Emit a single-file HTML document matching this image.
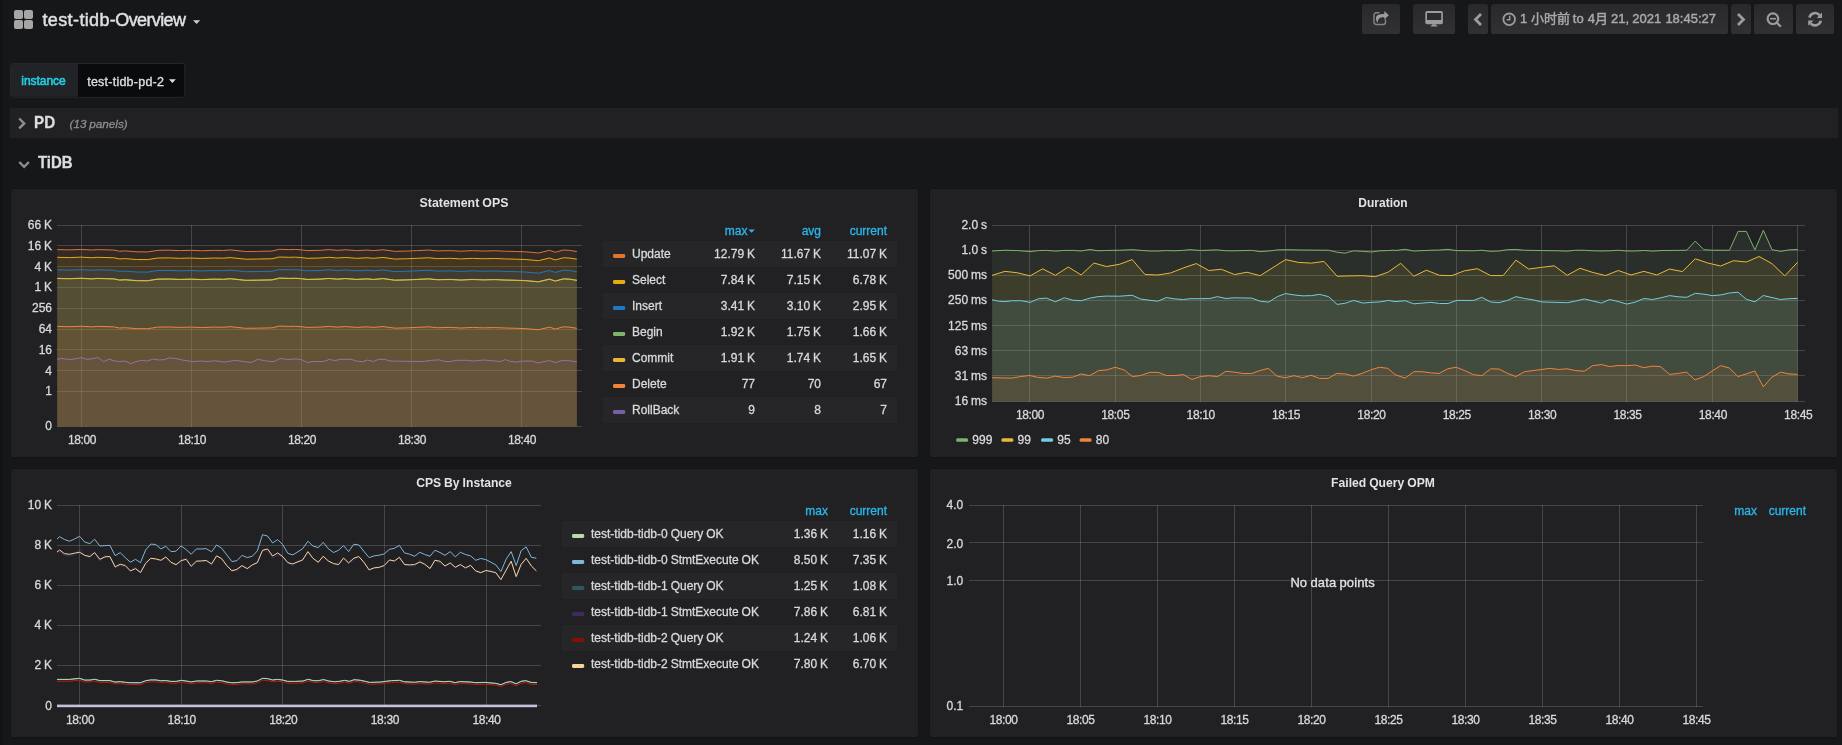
<!DOCTYPE html><html><head><meta charset="utf-8"><title>test-tidb-Overview</title>
<style>html,body{margin:0;padding:0;background:#161719;overflow:hidden}svg{display:block;will-change:transform}text{font-family:'Liberation Sans','Noto Sans CJK SC',sans-serif;white-space:pre;word-spacing:-0.4px}</style></head><body>
<svg width="1842" height="745" viewBox="0 0 1842 745">
<defs><linearGradient id="btn" x1="0" y1="0" x2="0" y2="1"><stop offset="0" stop-color="#29292b"/><stop offset="1" stop-color="#313133"/></linearGradient><linearGradient id="edge" x1="0" y1="0" x2="1" y2="0"><stop offset="0" stop-color="#101112"/><stop offset="0.5" stop-color="#131416"/><stop offset="1" stop-color="#161719"/></linearGradient></defs>
<rect width="1842" height="745" fill="#161719"/>
<rect x="0" y="0" width="5" height="745" fill="url(#edge)"/>
<rect x="14" y="10" width="9" height="9" rx="2" fill="#a6a6a6"/>
<rect x="24" y="10" width="9" height="9" rx="2" fill="#a6a6a6"/>
<rect x="14" y="20" width="9" height="9" rx="2" fill="#a6a6a6"/>
<rect x="24" y="20" width="9" height="9" rx="2" fill="#a6a6a6"/>
<text y="26.2" font-size="18" fill="#dfe0e1" stroke="#dfe0e1" stroke-width="0.45"><tspan x="42.5" letter-spacing="0.36">test-</tspan><tspan x="79.4" letter-spacing="0.36">tidb-</tspan><tspan x="115.3" letter-spacing="-0.62">Overview</tspan></text>
<path d="M193,20.2 h7.2 l-3.6,3.9 z" fill="#d0d0d0"/>
<rect x="1362" y="4" width="38" height="30" rx="2.5" fill="url(#btn)"/>
<path d="M1378.9,12.8 H1376.2 a2.2,2.2 0 0 0 -2.2,2.2 V22.2 a2.2,2.2 0 0 0 2.2,2.2 H1383.3 a2.2,2.2 0 0 0 2.2,-2.2 V19.8" fill="none" stroke="#838383" stroke-width="1.45" stroke-linecap="round"/>
<path d="M1384.3,11.0 L1388.8,15.2 L1384.3,19.5 L1384.3,17.3 C1381.5,17.3 1378.7,17.8 1378.1,20.6 C1377.9,21.5 1377.7,22.2 1377.4,22.9 C1376.4,21.2 1375.8,19.4 1376.0,17.6 C1376.4,15.0 1379,14.0 1384.3,14.0 Z" fill="#9c9c9c"/>
<rect x="1413" y="4" width="42" height="30" rx="2.5" fill="url(#btn)"/>
<path d="M1427,11 h14.2 a1.7,1.7 0 0 1 1.7,1.7 v9.9 a1.7,1.7 0 0 1 -1.7,1.7 h-14.2 a1.7,1.7 0 0 1 -1.7,-1.7 v-9.9 a1.7,1.7 0 0 1 1.7,-1.7 z M1427,12.9 v7 h14.2 v-7 z" fill="#9c9c9c" fill-rule="evenodd"/>
<path d="M1432.3,24.3 h3.6 l0.5,1.2 h1 v0.9 h-6.6 v-0.9 h1 z" fill="#9c9c9c"/>
<rect x="1468" y="4" width="20" height="30" rx="2.5" fill="url(#btn)"/>
<path d="M1481.0,14.1 l-5.5,5.5 l5.5,5.5" fill="none" stroke="#9c9c9c" stroke-width="2.8"/>
<rect x="1491" y="4" width="237" height="30" rx="2.5" fill="url(#btn)"/>
<circle cx="1509.2" cy="19.3" r="5.8" fill="none" stroke="#9c9c9c" stroke-width="1.8"/>
<path d="M1509.7,15.8 v4.0 h-3" fill="none" stroke="#9c9c9c" stroke-width="1.5"/>
<text y="23.1" font-size="13" fill="#a9a9a9" stroke="#a9a9a9" stroke-width="0.45"><tspan x="1520.0">1 </tspan><tspan x="1531.0">小时前 </tspan><tspan x="1572.8">to </tspan><tspan x="1587.7">4月 </tspan><tspan x="1611.0">21, </tspan><tspan x="1632.3">2021 </tspan><tspan x="1665.4">18:45:27</tspan></text>
<rect x="1731" y="4" width="20" height="30" rx="2.5" fill="url(#btn)"/>
<path d="M1738.0,14.1 l5.5,5.5 l-5.5,5.5" fill="none" stroke="#9c9c9c" stroke-width="2.8"/>
<rect x="1754" y="4" width="39" height="30" rx="2.5" fill="url(#btn)"/>
<circle cx="1772.9" cy="18.7" r="5.3" fill="none" stroke="#9c9c9c" stroke-width="2.2"/>
<path d="M1776.9,22.7 l3.3,3.3" stroke="#9c9c9c" stroke-width="2.3" stroke-linecap="round"/>
<path d="M1770,18.7 h6" stroke="#9c9c9c" stroke-width="1.6"/>
<rect x="1796" y="4" width="38" height="30" rx="2.5" fill="url(#btn)"/>
<path d="M1809.4,17.6 a5.9,5.9 0 0 1 10.2,-2.5" fill="none" stroke="#9c9c9c" stroke-width="2.6"/>
<path d="M1822,12.6 v5.3 h-5.3 z" fill="#9c9c9c"/>
<path d="M1820.8,20.8 a5.9,5.9 0 0 1 -10.2,2.5" fill="none" stroke="#9c9c9c" stroke-width="2.6"/>
<path d="M1808.2,25.8 v-5.3 h5.3 z" fill="#9c9c9c"/>
<rect x="10.5" y="63.5" width="174.3" height="33.8" rx="2.5" fill="#0a0b0d" stroke="#27272a"/>
<path d="M13,64 h65 v32.8 h-65 a2,2 0 0 1 -2,-2 v-28.8 a2,2 0 0 1 2,-2 z" fill="#222327"/>
<text x="21.30" y="84.90" font-size="12" fill="#20d2e4" letter-spacing="-0.05" stroke="#20d2e4" stroke-width="0.55">instance</text>
<text x="87.20" y="85.80" font-size="12.5" fill="#dfe0e1" letter-spacing="0.24" stroke="#dfe0e1" stroke-width="0.3">test-tidb-pd-2</text>
<path d="M169,79.3 h6.8 l-3.4,3.6 z" fill="#dfe0e1"/>
<rect x="10" y="108" width="1828" height="30" fill="#212124"/>
<path d="M19.2,118.5 l5.0,4.9 l-5.0,4.9" fill="none" stroke="#8e8e8e" stroke-width="2.4"/>
<text transform="translate(34.10,127.80) scale(0.95,1)" font-size="16" fill="#dcdddd" font-weight="bold" stroke="#dcdddd" stroke-width="0.3">PD</text>
<text x="69.60" y="127.50" font-size="11.8" fill="#8e8e8e" font-style="italic" letter-spacing="-0.05" stroke="#8e8e8e" stroke-width="0.3">(13 panels)</text>
<path d="M19.3,162.0 l4.8,4.8 l4.8,-4.8" fill="none" stroke="#8e8e8e" stroke-width="2.4"/>
<text transform="translate(37.90,167.60) scale(0.935,1)" font-size="16" fill="#dcdddd" font-weight="bold" stroke="#dcdddd" stroke-width="0.3">TiDB</text>
<rect x="10.5" y="188.5" width="908" height="269" rx="3" fill="#212124" stroke="#131314" stroke-width="1"/>
<rect x="929.5" y="188.5" width="908" height="269" rx="3" fill="#212124" stroke="#131314" stroke-width="1"/>
<rect x="10.5" y="468.5" width="908" height="269" rx="3" fill="#212124" stroke="#131314" stroke-width="1"/>
<rect x="929.5" y="468.5" width="908" height="269" rx="3" fill="#212124" stroke="#131314" stroke-width="1"/>
<text x="464" y="207.1" font-size="13" font-weight="bold" fill="#e2e3e4" text-anchor="middle" textLength="88.8" lengthAdjust="spacingAndGlyphs">Statement OPS</text>
<g id="c1">
<rect x="57" y="225" width="525" height="1" fill="rgba(200,200,200,0.22)"/>
<rect x="57" y="245" width="525" height="1" fill="rgba(200,200,200,0.22)"/>
<rect x="57" y="266" width="525" height="1" fill="rgba(200,200,200,0.22)"/>
<rect x="57" y="287" width="525" height="1" fill="rgba(200,200,200,0.22)"/>
<rect x="57" y="308" width="525" height="1" fill="rgba(200,200,200,0.22)"/>
<rect x="57" y="329" width="525" height="1" fill="rgba(200,200,200,0.22)"/>
<rect x="57" y="349" width="525" height="1" fill="rgba(200,200,200,0.22)"/>
<rect x="57" y="370" width="525" height="1" fill="rgba(200,200,200,0.22)"/>
<rect x="57" y="391" width="525" height="1" fill="rgba(200,200,200,0.22)"/>
<rect x="57" y="426" width="525" height="1" fill="rgba(200,200,200,0.22)"/>
<rect x="81" y="225" width="1" height="202" fill="rgba(200,200,200,0.22)"/>
<rect x="191" y="225" width="1" height="202" fill="rgba(200,200,200,0.22)"/>
<rect x="301" y="225" width="1" height="202" fill="rgba(200,200,200,0.22)"/>
<rect x="411" y="225" width="1" height="202" fill="rgba(200,200,200,0.22)"/>
<rect x="521" y="225" width="1" height="202" fill="rgba(200,200,200,0.22)"/>
<path d="M57.20,249.60 L69.66,249.89 L81.39,249.45 L91.66,250.04 L97.52,249.60 L113.65,250.04 L119.52,251.21 L125.38,250.92 L136.38,251.80 L147.38,251.94 L157.64,250.33 L169.37,250.18 L179.63,250.62 L191.36,250.33 L201.63,250.77 L213.36,250.33 L223.62,250.48 L230.22,249.89 L245.62,251.50 L257.35,251.36 L272.01,251.06 L279.34,249.30 L289.60,249.60 L295.47,249.45 L301.33,249.89 L307.20,250.62 L318.93,250.33 L320.00,250.33 L328.80,249.60 L337.60,250.33 L345.66,249.74 L356.66,250.62 L366.92,250.04 L373.52,250.62 L383.05,249.74 L394.78,251.36 L406.51,251.06 L416.77,250.62 L428.50,250.04 L437.30,250.92 L450.50,250.62 L460.76,251.21 L472.49,250.62 L482.76,251.06 L494.49,250.77 L505.48,251.21 L516.48,251.50 L525.28,251.80 L538.48,252.97 L549.47,250.33 L555.34,252.24 L563.40,250.04 L569.27,250.33 L576.89,251.50 L576.89,426.5 L57.20,426.5 Z" fill="#e0752d" fill-opacity="0.1" stroke="none"/>
<path d="M57.20,249.60 L69.66,249.89 L81.39,249.45 L91.66,250.04 L97.52,249.60 L113.65,250.04 L119.52,251.21 L125.38,250.92 L136.38,251.80 L147.38,251.94 L157.64,250.33 L169.37,250.18 L179.63,250.62 L191.36,250.33 L201.63,250.77 L213.36,250.33 L223.62,250.48 L230.22,249.89 L245.62,251.50 L257.35,251.36 L272.01,251.06 L279.34,249.30 L289.60,249.60 L295.47,249.45 L301.33,249.89 L307.20,250.62 L318.93,250.33 L320.00,250.33 L328.80,249.60 L337.60,250.33 L345.66,249.74 L356.66,250.62 L366.92,250.04 L373.52,250.62 L383.05,249.74 L394.78,251.36 L406.51,251.06 L416.77,250.62 L428.50,250.04 L437.30,250.92 L450.50,250.62 L460.76,251.21 L472.49,250.62 L482.76,251.06 L494.49,250.77 L505.48,251.21 L516.48,251.50 L525.28,251.80 L538.48,252.97 L549.47,250.33 L555.34,252.24 L563.40,250.04 L569.27,250.33 L576.89,251.50" fill="none" stroke="#e0752d" stroke-width="1" stroke-linejoin="round"/>
<path d="M57.20,257.30 L69.66,257.59 L81.39,257.15 L91.66,257.74 L97.52,257.30 L113.65,257.74 L119.52,258.91 L125.38,258.62 L136.38,259.50 L147.38,259.64 L157.64,258.03 L169.37,257.88 L179.63,258.32 L191.36,258.03 L201.63,258.47 L213.36,258.03 L223.62,258.18 L230.22,257.59 L245.62,259.20 L257.35,259.06 L272.01,258.76 L279.34,257.00 L289.60,257.30 L295.47,257.15 L301.33,257.59 L307.20,258.32 L318.93,258.03 L320.00,258.03 L328.80,257.30 L337.60,258.03 L345.66,257.44 L356.66,258.32 L366.92,257.74 L373.52,258.32 L383.05,257.44 L394.78,259.06 L406.51,258.76 L416.77,258.32 L428.50,257.74 L437.30,258.62 L450.50,258.32 L460.76,258.91 L472.49,258.32 L482.76,258.76 L494.49,258.47 L505.48,258.91 L516.48,259.20 L525.28,259.50 L538.48,260.67 L549.47,258.03 L555.34,259.94 L563.40,257.74 L569.27,258.03 L576.89,259.20 L576.89,426.5 L57.20,426.5 Z" fill="#e5ac0e" fill-opacity="0.1" stroke="none"/>
<path d="M57.20,257.30 L69.66,257.59 L81.39,257.15 L91.66,257.74 L97.52,257.30 L113.65,257.74 L119.52,258.91 L125.38,258.62 L136.38,259.50 L147.38,259.64 L157.64,258.03 L169.37,257.88 L179.63,258.32 L191.36,258.03 L201.63,258.47 L213.36,258.03 L223.62,258.18 L230.22,257.59 L245.62,259.20 L257.35,259.06 L272.01,258.76 L279.34,257.00 L289.60,257.30 L295.47,257.15 L301.33,257.59 L307.20,258.32 L318.93,258.03 L320.00,258.03 L328.80,257.30 L337.60,258.03 L345.66,257.44 L356.66,258.32 L366.92,257.74 L373.52,258.32 L383.05,257.44 L394.78,259.06 L406.51,258.76 L416.77,258.32 L428.50,257.74 L437.30,258.62 L450.50,258.32 L460.76,258.91 L472.49,258.32 L482.76,258.76 L494.49,258.47 L505.48,258.91 L516.48,259.20 L525.28,259.50 L538.48,260.67 L549.47,258.03 L555.34,259.94 L563.40,257.74 L569.27,258.03 L576.89,259.20" fill="none" stroke="#e5ac0e" stroke-width="1" stroke-linejoin="round"/>
<path d="M57.20,269.80 L69.66,270.09 L81.39,269.65 L91.66,270.24 L97.52,269.80 L113.65,270.24 L119.52,271.41 L125.38,271.12 L136.38,272.00 L147.38,272.14 L157.64,270.53 L169.37,270.38 L179.63,270.82 L191.36,270.53 L201.63,270.97 L213.36,270.53 L223.62,270.68 L230.22,270.09 L245.62,271.70 L257.35,271.56 L272.01,271.26 L279.34,269.50 L289.60,269.80 L295.47,269.65 L301.33,270.09 L307.20,270.82 L318.93,270.53 L320.00,270.53 L328.80,269.80 L337.60,270.53 L345.66,269.94 L356.66,270.82 L366.92,270.24 L373.52,270.82 L383.05,269.94 L394.78,271.56 L406.51,271.26 L416.77,270.82 L428.50,270.24 L437.30,271.12 L450.50,270.82 L460.76,271.41 L472.49,270.82 L482.76,271.26 L494.49,270.97 L505.48,271.41 L516.48,271.70 L525.28,272.00 L538.48,273.17 L549.47,270.53 L555.34,272.44 L563.40,270.24 L569.27,270.53 L576.89,271.70 L576.89,426.5 L57.20,426.5 Z" fill="#1f78c1" fill-opacity="0.1" stroke="none"/>
<path d="M57.20,269.80 L69.66,270.09 L81.39,269.65 L91.66,270.24 L97.52,269.80 L113.65,270.24 L119.52,271.41 L125.38,271.12 L136.38,272.00 L147.38,272.14 L157.64,270.53 L169.37,270.38 L179.63,270.82 L191.36,270.53 L201.63,270.97 L213.36,270.53 L223.62,270.68 L230.22,270.09 L245.62,271.70 L257.35,271.56 L272.01,271.26 L279.34,269.50 L289.60,269.80 L295.47,269.65 L301.33,270.09 L307.20,270.82 L318.93,270.53 L320.00,270.53 L328.80,269.80 L337.60,270.53 L345.66,269.94 L356.66,270.82 L366.92,270.24 L373.52,270.82 L383.05,269.94 L394.78,271.56 L406.51,271.26 L416.77,270.82 L428.50,270.24 L437.30,271.12 L450.50,270.82 L460.76,271.41 L472.49,270.82 L482.76,271.26 L494.49,270.97 L505.48,271.41 L516.48,271.70 L525.28,272.00 L538.48,273.17 L549.47,270.53 L555.34,272.44 L563.40,270.24 L569.27,270.53 L576.89,271.70" fill="none" stroke="#1f78c1" stroke-width="1" stroke-linejoin="round"/>
<path d="M57.20,278.30 L69.66,278.59 L81.39,278.15 L91.66,278.74 L97.52,278.30 L113.65,278.74 L119.52,279.91 L125.38,279.62 L136.38,280.50 L147.38,280.64 L157.64,279.03 L169.37,278.88 L179.63,279.32 L191.36,279.03 L201.63,279.47 L213.36,279.03 L223.62,279.18 L230.22,278.59 L245.62,280.20 L257.35,280.06 L272.01,279.76 L279.34,278.00 L289.60,278.30 L295.47,278.15 L301.33,278.59 L307.20,279.32 L318.93,279.03 L320.00,279.03 L328.80,278.30 L337.60,279.03 L345.66,278.44 L356.66,279.32 L366.92,278.74 L373.52,279.32 L383.05,278.44 L394.78,280.06 L406.51,279.76 L416.77,279.32 L428.50,278.74 L437.30,279.62 L450.50,279.32 L460.76,279.91 L472.49,279.32 L482.76,279.76 L494.49,279.47 L505.48,279.91 L516.48,280.20 L525.28,280.50 L538.48,281.67 L549.47,279.03 L555.34,280.94 L563.40,278.74 L569.27,279.03 L576.89,280.20 L576.89,426.5 L57.20,426.5 Z" fill="#7eb26d" fill-opacity="0.06" stroke="none"/>
<path d="M57.20,278.30 L69.66,278.59 L81.39,278.15 L91.66,278.74 L97.52,278.30 L113.65,278.74 L119.52,279.91 L125.38,279.62 L136.38,280.50 L147.38,280.64 L157.64,279.03 L169.37,278.88 L179.63,279.32 L191.36,279.03 L201.63,279.47 L213.36,279.03 L223.62,279.18 L230.22,278.59 L245.62,280.20 L257.35,280.06 L272.01,279.76 L279.34,278.00 L289.60,278.30 L295.47,278.15 L301.33,278.59 L307.20,279.32 L318.93,279.03 L320.00,279.03 L328.80,278.30 L337.60,279.03 L345.66,278.44 L356.66,279.32 L366.92,278.74 L373.52,279.32 L383.05,278.44 L394.78,280.06 L406.51,279.76 L416.77,279.32 L428.50,278.74 L437.30,279.62 L450.50,279.32 L460.76,279.91 L472.49,279.32 L482.76,279.76 L494.49,279.47 L505.48,279.91 L516.48,280.20 L525.28,280.50 L538.48,281.67 L549.47,279.03 L555.34,280.94 L563.40,278.74 L569.27,279.03 L576.89,280.20" fill="none" stroke="#7eb26d" stroke-width="1" stroke-linejoin="round"/>
<path d="M57.20,278.50 L69.66,278.79 L81.39,278.35 L91.66,278.94 L97.52,278.50 L113.65,278.94 L119.52,280.11 L125.38,279.82 L136.38,280.70 L147.38,280.84 L157.64,279.23 L169.37,279.08 L179.63,279.52 L191.36,279.23 L201.63,279.67 L213.36,279.23 L223.62,279.38 L230.22,278.79 L245.62,280.40 L257.35,280.26 L272.01,279.96 L279.34,278.20 L289.60,278.50 L295.47,278.35 L301.33,278.79 L307.20,279.52 L318.93,279.23 L320.00,279.23 L328.80,278.50 L337.60,279.23 L345.66,278.64 L356.66,279.52 L366.92,278.94 L373.52,279.52 L383.05,278.64 L394.78,280.26 L406.51,279.96 L416.77,279.52 L428.50,278.94 L437.30,279.82 L450.50,279.52 L460.76,280.11 L472.49,279.52 L482.76,279.96 L494.49,279.67 L505.48,280.11 L516.48,280.40 L525.28,280.70 L538.48,281.87 L549.47,279.23 L555.34,281.14 L563.40,278.94 L569.27,279.23 L576.89,280.40 L576.89,426.5 L57.20,426.5 Z" fill="#eab839" fill-opacity="0.1" stroke="none"/>
<path d="M57.20,278.50 L69.66,278.79 L81.39,278.35 L91.66,278.94 L97.52,278.50 L113.65,278.94 L119.52,280.11 L125.38,279.82 L136.38,280.70 L147.38,280.84 L157.64,279.23 L169.37,279.08 L179.63,279.52 L191.36,279.23 L201.63,279.67 L213.36,279.23 L223.62,279.38 L230.22,278.79 L245.62,280.40 L257.35,280.26 L272.01,279.96 L279.34,278.20 L289.60,278.50 L295.47,278.35 L301.33,278.79 L307.20,279.52 L318.93,279.23 L320.00,279.23 L328.80,278.50 L337.60,279.23 L345.66,278.64 L356.66,279.52 L366.92,278.94 L373.52,279.52 L383.05,278.64 L394.78,280.26 L406.51,279.96 L416.77,279.52 L428.50,278.94 L437.30,279.82 L450.50,279.52 L460.76,280.11 L472.49,279.52 L482.76,279.96 L494.49,279.67 L505.48,280.11 L516.48,280.40 L525.28,280.70 L538.48,281.87 L549.47,279.23 L555.34,281.14 L563.40,278.94 L569.27,279.23 L576.89,280.40" fill="none" stroke="#eab839" stroke-width="1" stroke-linejoin="round"/>
<path d="M57.20,326.40 L69.66,326.69 L81.39,326.25 L91.66,326.84 L97.52,326.40 L113.65,326.84 L119.52,328.01 L125.38,327.72 L136.38,328.60 L147.38,328.74 L157.64,327.13 L169.37,326.98 L179.63,327.42 L191.36,327.13 L201.63,327.57 L213.36,327.13 L223.62,327.28 L230.22,326.69 L245.62,328.30 L257.35,328.16 L272.01,327.86 L279.34,326.10 L289.60,326.40 L295.47,326.25 L301.33,326.69 L307.20,327.42 L318.93,327.13 L320.00,327.13 L328.80,326.40 L337.60,327.13 L345.66,326.54 L356.66,327.42 L366.92,326.84 L373.52,327.42 L383.05,326.54 L394.78,328.16 L406.51,327.86 L416.77,327.42 L428.50,326.84 L437.30,327.72 L450.50,327.42 L460.76,328.01 L472.49,327.42 L482.76,327.86 L494.49,327.57 L505.48,328.01 L516.48,328.30 L525.28,328.60 L538.48,329.77 L549.47,327.13 L555.34,329.04 L563.40,326.84 L569.27,327.13 L576.89,328.30 L576.89,426.5 L57.20,426.5 Z" fill="#ef843c" fill-opacity="0.1" stroke="none"/>
<path d="M57.20,326.40 L69.66,326.69 L81.39,326.25 L91.66,326.84 L97.52,326.40 L113.65,326.84 L119.52,328.01 L125.38,327.72 L136.38,328.60 L147.38,328.74 L157.64,327.13 L169.37,326.98 L179.63,327.42 L191.36,327.13 L201.63,327.57 L213.36,327.13 L223.62,327.28 L230.22,326.69 L245.62,328.30 L257.35,328.16 L272.01,327.86 L279.34,326.10 L289.60,326.40 L295.47,326.25 L301.33,326.69 L307.20,327.42 L318.93,327.13 L320.00,327.13 L328.80,326.40 L337.60,327.13 L345.66,326.54 L356.66,327.42 L366.92,326.84 L373.52,327.42 L383.05,326.54 L394.78,328.16 L406.51,327.86 L416.77,327.42 L428.50,326.84 L437.30,327.72 L450.50,327.42 L460.76,328.01 L472.49,327.42 L482.76,327.86 L494.49,327.57 L505.48,328.01 L516.48,328.30 L525.28,328.60 L538.48,329.77 L549.47,327.13 L555.34,329.04 L563.40,326.84 L569.27,327.13 L576.89,328.30" fill="none" stroke="#ef843c" stroke-width="1" stroke-linejoin="round"/>
<path d="M57.20,359.30 L60.87,358.42 L70.40,359.59 L81.39,357.68 L86.52,359.30 L91.66,358.86 L97.82,357.39 L103.68,361.79 L108.96,359.15 L115.12,361.06 L119.52,361.50 L125.38,361.06 L130.81,363.70 L135.65,361.79 L141.51,360.32 L147.08,361.06 L153.24,359.00 L158.37,360.03 L164.24,359.59 L169.37,357.83 L175.23,358.42 L182.57,360.03 L191.36,361.50 L201.63,361.06 L207.49,361.50 L214.82,360.76 L224.35,362.08 L235.35,360.32 L242.68,361.50 L251.48,362.52 L257.79,359.30 L263.21,360.47 L269.08,361.35 L274.21,361.50 L280.07,358.42 L285.94,359.30 L291.07,359.30 L296.20,358.86 L301.33,359.59 L307.49,362.52 L313.06,361.50 L318.93,361.50 L320.00,361.79 L324.40,361.35 L329.53,359.30 L334.66,360.62 L340.53,359.30 L350.79,359.30 L356.66,361.06 L362.52,361.79 L367.65,360.03 L373.52,361.50 L378.65,359.30 L384.52,359.30 L390.38,361.06 L410.91,361.35 L422.64,361.50 L431.44,360.32 L439.50,359.88 L444.63,361.50 L450.50,361.50 L456.36,360.32 L466.63,360.32 L472.49,361.06 L483.49,360.03 L500.35,361.50 L505.48,359.59 L510.62,361.50 L516.48,362.08 L522.35,361.06 L532.61,361.06 L538.48,362.96 L544.34,361.50 L549.47,360.62 L555.34,362.52 L561.94,360.62 L567.80,360.62 L576.89,361.79 L576.89,426.5 L57.20,426.5 Z" fill="#9a6ea8" fill-opacity="0.05" stroke="none"/>
<path d="M57.20,359.30 L60.87,358.42 L70.40,359.59 L81.39,357.68 L86.52,359.30 L91.66,358.86 L97.82,357.39 L103.68,361.79 L108.96,359.15 L115.12,361.06 L119.52,361.50 L125.38,361.06 L130.81,363.70 L135.65,361.79 L141.51,360.32 L147.08,361.06 L153.24,359.00 L158.37,360.03 L164.24,359.59 L169.37,357.83 L175.23,358.42 L182.57,360.03 L191.36,361.50 L201.63,361.06 L207.49,361.50 L214.82,360.76 L224.35,362.08 L235.35,360.32 L242.68,361.50 L251.48,362.52 L257.79,359.30 L263.21,360.47 L269.08,361.35 L274.21,361.50 L280.07,358.42 L285.94,359.30 L291.07,359.30 L296.20,358.86 L301.33,359.59 L307.49,362.52 L313.06,361.50 L318.93,361.50 L320.00,361.79 L324.40,361.35 L329.53,359.30 L334.66,360.62 L340.53,359.30 L350.79,359.30 L356.66,361.06 L362.52,361.79 L367.65,360.03 L373.52,361.50 L378.65,359.30 L384.52,359.30 L390.38,361.06 L410.91,361.35 L422.64,361.50 L431.44,360.32 L439.50,359.88 L444.63,361.50 L450.50,361.50 L456.36,360.32 L466.63,360.32 L472.49,361.06 L483.49,360.03 L500.35,361.50 L505.48,359.59 L510.62,361.50 L516.48,362.08 L522.35,361.06 L532.61,361.06 L538.48,362.96 L544.34,361.50 L549.47,360.62 L555.34,362.52 L561.94,360.62 L567.80,360.62 L576.89,361.79" fill="none" stroke="#9a6ea8" stroke-width="1" stroke-linejoin="round"/>
</g>
<text x="52.00" y="228.90" font-size="12" fill="#d8d9da" text-anchor="end" stroke="#d8d9da" stroke-width="0.3">66 K</text>
<text x="52.00" y="249.71" font-size="12" fill="#d8d9da" text-anchor="end" stroke="#d8d9da" stroke-width="0.3">16 K</text>
<text x="52.00" y="270.52" font-size="12" fill="#d8d9da" text-anchor="end" stroke="#d8d9da" stroke-width="0.3">4 K</text>
<text x="52.00" y="291.33" font-size="12" fill="#d8d9da" text-anchor="end" stroke="#d8d9da" stroke-width="0.3">1 K</text>
<text x="52.00" y="312.14" font-size="12" fill="#d8d9da" text-anchor="end" stroke="#d8d9da" stroke-width="0.3">256</text>
<text x="52.00" y="332.95" font-size="12" fill="#d8d9da" text-anchor="end" stroke="#d8d9da" stroke-width="0.3">64</text>
<text x="52.00" y="353.76" font-size="12" fill="#d8d9da" text-anchor="end" stroke="#d8d9da" stroke-width="0.3">16</text>
<text x="52.00" y="374.57" font-size="12" fill="#d8d9da" text-anchor="end" stroke="#d8d9da" stroke-width="0.3">4</text>
<text x="52.00" y="395.38" font-size="12" fill="#d8d9da" text-anchor="end" stroke="#d8d9da" stroke-width="0.3">1</text>
<text x="52.00" y="430.10" font-size="12" fill="#d8d9da" text-anchor="end" stroke="#d8d9da" stroke-width="0.3">0</text>
<text x="82.00" y="444.00" font-size="12" fill="#d8d9da" text-anchor="middle" letter-spacing="-0.36" stroke="#d8d9da" stroke-width="0.3">18:00</text>
<text x="192.00" y="444.00" font-size="12" fill="#d8d9da" text-anchor="middle" letter-spacing="-0.36" stroke="#d8d9da" stroke-width="0.3">18:10</text>
<text x="302.00" y="444.00" font-size="12" fill="#d8d9da" text-anchor="middle" letter-spacing="-0.36" stroke="#d8d9da" stroke-width="0.3">18:20</text>
<text x="412.00" y="444.00" font-size="12" fill="#d8d9da" text-anchor="middle" letter-spacing="-0.36" stroke="#d8d9da" stroke-width="0.3">18:30</text>
<text x="522.00" y="444.00" font-size="12" fill="#d8d9da" text-anchor="middle" letter-spacing="-0.36" stroke="#d8d9da" stroke-width="0.3">18:40</text>
<text x="747.50" y="234.90" font-size="12" fill="#2ab8ec" text-anchor="end" stroke="#2ab8ec" stroke-width="0.3">max</text>
<path d="M748.4,229.4 h6.4 l-3.2,3.4 z" fill="#2ab8ec"/>
<text x="821.00" y="234.90" font-size="12" fill="#2ab8ec" text-anchor="end" stroke="#2ab8ec" stroke-width="0.3">avg</text>
<text x="887.00" y="234.90" font-size="12" fill="#2ab8ec" text-anchor="end" stroke="#2ab8ec" stroke-width="0.3">current</text>
<rect x="603" y="241" width="294" height="26" fill="#262628"/>
<rect x="613" y="254.1" width="12.2" height="3.8" rx="1.3" fill="#e0752d"/>
<text x="632.00" y="258.00" font-size="12" fill="#d8d9da" stroke="#d8d9da" stroke-width="0.3">Update</text>
<text x="755.00" y="258.00" font-size="12" fill="#d8d9da" text-anchor="end" stroke="#d8d9da" stroke-width="0.3">12.79 K</text>
<text x="821.00" y="258.00" font-size="12" fill="#d8d9da" text-anchor="end" stroke="#d8d9da" stroke-width="0.3">11.67 K</text>
<text x="887.00" y="258.00" font-size="12" fill="#d8d9da" text-anchor="end" stroke="#d8d9da" stroke-width="0.3">11.07 K</text>
<rect x="613" y="280.1" width="12.2" height="3.8" rx="1.3" fill="#e5ac0e"/>
<text x="632.00" y="284.00" font-size="12" fill="#d8d9da" stroke="#d8d9da" stroke-width="0.3">Select</text>
<text x="755.00" y="284.00" font-size="12" fill="#d8d9da" text-anchor="end" stroke="#d8d9da" stroke-width="0.3">7.84 K</text>
<text x="821.00" y="284.00" font-size="12" fill="#d8d9da" text-anchor="end" stroke="#d8d9da" stroke-width="0.3">7.15 K</text>
<text x="887.00" y="284.00" font-size="12" fill="#d8d9da" text-anchor="end" stroke="#d8d9da" stroke-width="0.3">6.78 K</text>
<rect x="603" y="293" width="294" height="26" fill="#262628"/>
<rect x="613" y="306.1" width="12.2" height="3.8" rx="1.3" fill="#1f78c1"/>
<text x="632.00" y="310.00" font-size="12" fill="#d8d9da" stroke="#d8d9da" stroke-width="0.3">Insert</text>
<text x="755.00" y="310.00" font-size="12" fill="#d8d9da" text-anchor="end" stroke="#d8d9da" stroke-width="0.3">3.41 K</text>
<text x="821.00" y="310.00" font-size="12" fill="#d8d9da" text-anchor="end" stroke="#d8d9da" stroke-width="0.3">3.10 K</text>
<text x="887.00" y="310.00" font-size="12" fill="#d8d9da" text-anchor="end" stroke="#d8d9da" stroke-width="0.3">2.95 K</text>
<rect x="613" y="332.1" width="12.2" height="3.8" rx="1.3" fill="#7eb26d"/>
<text x="632.00" y="336.00" font-size="12" fill="#d8d9da" stroke="#d8d9da" stroke-width="0.3">Begin</text>
<text x="755.00" y="336.00" font-size="12" fill="#d8d9da" text-anchor="end" stroke="#d8d9da" stroke-width="0.3">1.92 K</text>
<text x="821.00" y="336.00" font-size="12" fill="#d8d9da" text-anchor="end" stroke="#d8d9da" stroke-width="0.3">1.75 K</text>
<text x="887.00" y="336.00" font-size="12" fill="#d8d9da" text-anchor="end" stroke="#d8d9da" stroke-width="0.3">1.66 K</text>
<rect x="603" y="345" width="294" height="26" fill="#262628"/>
<rect x="613" y="358.1" width="12.2" height="3.8" rx="1.3" fill="#eab839"/>
<text x="632.00" y="362.00" font-size="12" fill="#d8d9da" stroke="#d8d9da" stroke-width="0.3">Commit</text>
<text x="755.00" y="362.00" font-size="12" fill="#d8d9da" text-anchor="end" stroke="#d8d9da" stroke-width="0.3">1.91 K</text>
<text x="821.00" y="362.00" font-size="12" fill="#d8d9da" text-anchor="end" stroke="#d8d9da" stroke-width="0.3">1.74 K</text>
<text x="887.00" y="362.00" font-size="12" fill="#d8d9da" text-anchor="end" stroke="#d8d9da" stroke-width="0.3">1.65 K</text>
<rect x="613" y="384.1" width="12.2" height="3.8" rx="1.3" fill="#ef843c"/>
<text x="632.00" y="388.00" font-size="12" fill="#d8d9da" stroke="#d8d9da" stroke-width="0.3">Delete</text>
<text x="755.00" y="388.00" font-size="12" fill="#d8d9da" text-anchor="end" stroke="#d8d9da" stroke-width="0.3">77</text>
<text x="821.00" y="388.00" font-size="12" fill="#d8d9da" text-anchor="end" stroke="#d8d9da" stroke-width="0.3">70</text>
<text x="887.00" y="388.00" font-size="12" fill="#d8d9da" text-anchor="end" stroke="#d8d9da" stroke-width="0.3">67</text>
<rect x="603" y="397" width="294" height="26" fill="#262628"/>
<rect x="613" y="410.1" width="12.2" height="3.8" rx="1.3" fill="#755fa6"/>
<text x="632.00" y="414.00" font-size="12" fill="#d8d9da" stroke="#d8d9da" stroke-width="0.3">RollBack</text>
<text x="755.00" y="414.00" font-size="12" fill="#d8d9da" text-anchor="end" stroke="#d8d9da" stroke-width="0.3">9</text>
<text x="821.00" y="414.00" font-size="12" fill="#d8d9da" text-anchor="end" stroke="#d8d9da" stroke-width="0.3">8</text>
<text x="887.00" y="414.00" font-size="12" fill="#d8d9da" text-anchor="end" stroke="#d8d9da" stroke-width="0.3">7</text>
<text x="1383" y="207.1" font-size="13" font-weight="bold" fill="#e2e3e4" text-anchor="middle" textLength="49.3" lengthAdjust="spacingAndGlyphs">Duration</text>
<g id="c2">
<rect x="992" y="225" width="813" height="1" fill="rgba(200,200,200,0.22)"/>
<rect x="992" y="250" width="813" height="1" fill="rgba(200,200,200,0.22)"/>
<rect x="992" y="275" width="813" height="1" fill="rgba(200,200,200,0.22)"/>
<rect x="992" y="300" width="813" height="1" fill="rgba(200,200,200,0.22)"/>
<rect x="992" y="325" width="813" height="1" fill="rgba(200,200,200,0.22)"/>
<rect x="992" y="350" width="813" height="1" fill="rgba(200,200,200,0.22)"/>
<rect x="992" y="375" width="813" height="1" fill="rgba(200,200,200,0.22)"/>
<rect x="992" y="401" width="813" height="1" fill="rgba(200,200,200,0.22)"/>
<rect x="1029" y="225" width="1" height="177" fill="rgba(200,200,200,0.22)"/>
<rect x="1115" y="225" width="1" height="177" fill="rgba(200,200,200,0.22)"/>
<rect x="1200" y="225" width="1" height="177" fill="rgba(200,200,200,0.22)"/>
<rect x="1285" y="225" width="1" height="177" fill="rgba(200,200,200,0.22)"/>
<rect x="1371" y="225" width="1" height="177" fill="rgba(200,200,200,0.22)"/>
<rect x="1456" y="225" width="1" height="177" fill="rgba(200,200,200,0.22)"/>
<rect x="1541" y="225" width="1" height="177" fill="rgba(200,200,200,0.22)"/>
<rect x="1626" y="225" width="1" height="177" fill="rgba(200,200,200,0.22)"/>
<rect x="1712" y="225" width="1" height="177" fill="rgba(200,200,200,0.22)"/>
<rect x="1797" y="225" width="1" height="177" fill="rgba(200,200,200,0.22)"/>
<path d="M992.07,251.03 L1004.96,250.23 L1017.51,250.57 L1030.06,251.60 L1038.61,250.57 L1046.59,250.34 L1055.38,251.14 L1063.70,250.46 L1072.83,250.34 L1081.16,251.03 L1089.94,249.43 L1097.92,250.80 L1106.48,250.46 L1119.60,250.23 L1132.14,249.66 L1140.70,250.34 L1149.25,251.03 L1157.81,251.03 L1166.36,250.57 L1174.92,250.80 L1183.47,250.34 L1189.17,249.66 L1190.00,249.66 L1200.61,250.46 L1217.38,249.88 L1225.93,250.80 L1234.49,250.80 L1251.59,250.34 L1260.15,251.60 L1268.70,251.03 L1277.26,249.88 L1285.59,249.66 L1302.92,250.00 L1328.59,250.23 L1337.14,252.28 L1345.13,253.08 L1353.68,250.80 L1362.81,251.37 L1371.36,251.94 L1379.92,250.80 L1388.47,250.57 L1394.17,250.11 L1395.00,250.57 L1405.27,249.31 L1413.82,251.03 L1430.93,250.23 L1439.49,250.00 L1448.04,249.31 L1456.59,250.57 L1473.70,250.80 L1481.69,250.23 L1490.59,251.37 L1498.80,251.03 L1507.35,249.66 L1515.91,249.43 L1524.46,250.23 L1541.57,250.57 L1558.68,250.80 L1567.24,251.14 L1575.79,250.23 L1584.35,250.23 L1592.90,250.80 L1599.17,250.91 L1600.00,251.03 L1609.70,250.80 L1618.25,250.23 L1626.81,251.03 L1635.36,251.03 L1643.91,250.46 L1652.47,251.14 L1661.02,250.57 L1686.69,250.23 L1695.24,241.10 L1703.80,249.66 L1712.35,250.23 L1729.46,250.23 L1738.02,231.41 L1746.34,231.41 L1754.90,249.88 L1763.34,230.27 L1772.01,249.66 L1780.56,251.37 L1789.12,249.88 L1797.67,249.43 L1797.67,401.5 L992.07,401.5 Z" fill="#7eb26d" fill-opacity="0.1" stroke="none"/>
<path d="M992.07,251.03 L1004.96,250.23 L1017.51,250.57 L1030.06,251.60 L1038.61,250.57 L1046.59,250.34 L1055.38,251.14 L1063.70,250.46 L1072.83,250.34 L1081.16,251.03 L1089.94,249.43 L1097.92,250.80 L1106.48,250.46 L1119.60,250.23 L1132.14,249.66 L1140.70,250.34 L1149.25,251.03 L1157.81,251.03 L1166.36,250.57 L1174.92,250.80 L1183.47,250.34 L1189.17,249.66 L1190.00,249.66 L1200.61,250.46 L1217.38,249.88 L1225.93,250.80 L1234.49,250.80 L1251.59,250.34 L1260.15,251.60 L1268.70,251.03 L1277.26,249.88 L1285.59,249.66 L1302.92,250.00 L1328.59,250.23 L1337.14,252.28 L1345.13,253.08 L1353.68,250.80 L1362.81,251.37 L1371.36,251.94 L1379.92,250.80 L1388.47,250.57 L1394.17,250.11 L1395.00,250.57 L1405.27,249.31 L1413.82,251.03 L1430.93,250.23 L1439.49,250.00 L1448.04,249.31 L1456.59,250.57 L1473.70,250.80 L1481.69,250.23 L1490.59,251.37 L1498.80,251.03 L1507.35,249.66 L1515.91,249.43 L1524.46,250.23 L1541.57,250.57 L1558.68,250.80 L1567.24,251.14 L1575.79,250.23 L1584.35,250.23 L1592.90,250.80 L1599.17,250.91 L1600.00,251.03 L1609.70,250.80 L1618.25,250.23 L1626.81,251.03 L1635.36,251.03 L1643.91,250.46 L1652.47,251.14 L1661.02,250.57 L1686.69,250.23 L1695.24,241.10 L1703.80,249.66 L1712.35,250.23 L1729.46,250.23 L1738.02,231.41 L1746.34,231.41 L1754.90,249.88 L1763.34,230.27 L1772.01,249.66 L1780.56,251.37 L1789.12,249.88 L1797.67,249.43" fill="none" stroke="#7eb26d" stroke-width="1" stroke-linejoin="round"/>
<path d="M992.07,275.32 L1004.96,271.33 L1017.51,272.81 L1030.06,275.89 L1042.60,268.82 L1055.38,275.32 L1068.27,266.99 L1081.16,274.98 L1093.93,263.00 L1106.48,266.54 L1119.60,264.26 L1132.14,259.58 L1145.03,274.52 L1157.81,274.98 L1170.35,273.04 L1183.47,267.91 L1196.27,263.57 L1208.82,270.53 L1221.37,269.28 L1234.49,274.52 L1247.03,272.24 L1260.15,275.66 L1285.59,259.58 L1298.36,262.43 L1311.48,263.12 L1324.03,261.41 L1337.14,276.23 L1349.69,275.89 L1362.81,275.66 L1375.35,276.69 L1387.90,272.24 L1400.70,263.34 L1413.82,276.23 L1426.37,270.19 L1439.49,275.32 L1452.03,275.55 L1464.58,270.76 L1477.35,268.71 L1490.59,275.55 L1503.13,275.55 L1515.91,260.15 L1528.68,269.05 L1541.57,267.34 L1554.35,265.85 L1567.24,275.32 L1580.01,268.25 L1592.90,272.47 L1605.48,275.55 L1618.25,270.53 L1631.03,274.98 L1643.91,271.33 L1656.69,274.98 L1669.58,269.05 L1682.35,271.56 L1695.24,258.78 L1708.13,263.12 L1720.68,265.97 L1733.46,260.72 L1746.34,261.98 L1759.12,256.50 L1772.01,263.69 L1784.78,275.89 L1797.67,262.20 L1797.67,401.5 L992.07,401.5 Z" fill="#eab839" fill-opacity="0.1" stroke="none"/>
<path d="M992.07,275.32 L1004.96,271.33 L1017.51,272.81 L1030.06,275.89 L1042.60,268.82 L1055.38,275.32 L1068.27,266.99 L1081.16,274.98 L1093.93,263.00 L1106.48,266.54 L1119.60,264.26 L1132.14,259.58 L1145.03,274.52 L1157.81,274.98 L1170.35,273.04 L1183.47,267.91 L1196.27,263.57 L1208.82,270.53 L1221.37,269.28 L1234.49,274.52 L1247.03,272.24 L1260.15,275.66 L1285.59,259.58 L1298.36,262.43 L1311.48,263.12 L1324.03,261.41 L1337.14,276.23 L1349.69,275.89 L1362.81,275.66 L1375.35,276.69 L1387.90,272.24 L1400.70,263.34 L1413.82,276.23 L1426.37,270.19 L1439.49,275.32 L1452.03,275.55 L1464.58,270.76 L1477.35,268.71 L1490.59,275.55 L1503.13,275.55 L1515.91,260.15 L1528.68,269.05 L1541.57,267.34 L1554.35,265.85 L1567.24,275.32 L1580.01,268.25 L1592.90,272.47 L1605.48,275.55 L1618.25,270.53 L1631.03,274.98 L1643.91,271.33 L1656.69,274.98 L1669.58,269.05 L1682.35,271.56 L1695.24,258.78 L1708.13,263.12 L1720.68,265.97 L1733.46,260.72 L1746.34,261.98 L1759.12,256.50 L1772.01,263.69 L1784.78,275.89 L1797.67,262.20" fill="none" stroke="#eab839" stroke-width="1" stroke-linejoin="round"/>
<path d="M992.07,299.84 L998.69,301.21 L1004.96,301.56 L1012.38,300.76 L1021.50,300.76 L1030.06,302.35 L1038.61,298.70 L1046.59,298.13 L1055.38,301.78 L1064.27,297.79 L1072.83,300.19 L1081.16,300.76 L1089.94,298.13 L1097.92,296.65 L1106.48,296.08 L1119.60,296.19 L1132.14,295.28 L1140.70,299.05 L1149.25,300.19 L1157.81,301.21 L1166.36,297.56 L1174.92,298.93 L1183.47,299.50 L1190.00,298.70 L1200.61,298.70 L1209.96,298.48 L1217.38,296.65 L1225.93,298.48 L1234.49,297.79 L1251.59,298.13 L1260.15,301.21 L1268.70,302.13 L1277.26,296.65 L1285.59,293.57 L1294.94,295.05 L1302.92,295.85 L1311.48,295.62 L1319.46,294.37 L1328.59,296.65 L1337.14,304.41 L1345.13,303.27 L1353.68,300.42 L1362.81,303.04 L1371.36,302.35 L1379.92,301.90 L1388.47,300.42 L1395.00,301.56 L1405.27,300.76 L1413.82,303.84 L1430.93,302.35 L1439.49,303.49 L1448.04,303.49 L1456.59,300.42 L1473.70,300.42 L1481.69,297.34 L1490.59,301.90 L1498.80,302.70 L1507.35,300.42 L1515.91,296.65 L1524.46,298.48 L1533.02,299.84 L1541.57,301.90 L1567.24,302.70 L1575.79,300.99 L1584.35,298.93 L1592.90,300.99 L1601.46,303.04 L1609.70,299.50 L1618.25,301.56 L1626.81,304.07 L1635.36,302.13 L1643.91,298.48 L1652.47,299.50 L1661.02,297.79 L1669.58,295.62 L1678.13,296.77 L1686.69,297.34 L1695.24,293.34 L1703.80,294.14 L1712.35,295.62 L1720.68,294.94 L1729.46,293.00 L1738.02,292.20 L1746.34,299.27 L1754.90,301.90 L1763.34,295.51 L1772.01,297.56 L1780.56,299.50 L1789.12,298.70 L1797.67,298.36 L1797.67,401.5 L992.07,401.5 Z" fill="#6ed0e0" fill-opacity="0.1" stroke="none"/>
<path d="M992.07,299.84 L998.69,301.21 L1004.96,301.56 L1012.38,300.76 L1021.50,300.76 L1030.06,302.35 L1038.61,298.70 L1046.59,298.13 L1055.38,301.78 L1064.27,297.79 L1072.83,300.19 L1081.16,300.76 L1089.94,298.13 L1097.92,296.65 L1106.48,296.08 L1119.60,296.19 L1132.14,295.28 L1140.70,299.05 L1149.25,300.19 L1157.81,301.21 L1166.36,297.56 L1174.92,298.93 L1183.47,299.50 L1190.00,298.70 L1200.61,298.70 L1209.96,298.48 L1217.38,296.65 L1225.93,298.48 L1234.49,297.79 L1251.59,298.13 L1260.15,301.21 L1268.70,302.13 L1277.26,296.65 L1285.59,293.57 L1294.94,295.05 L1302.92,295.85 L1311.48,295.62 L1319.46,294.37 L1328.59,296.65 L1337.14,304.41 L1345.13,303.27 L1353.68,300.42 L1362.81,303.04 L1371.36,302.35 L1379.92,301.90 L1388.47,300.42 L1395.00,301.56 L1405.27,300.76 L1413.82,303.84 L1430.93,302.35 L1439.49,303.49 L1448.04,303.49 L1456.59,300.42 L1473.70,300.42 L1481.69,297.34 L1490.59,301.90 L1498.80,302.70 L1507.35,300.42 L1515.91,296.65 L1524.46,298.48 L1533.02,299.84 L1541.57,301.90 L1567.24,302.70 L1575.79,300.99 L1584.35,298.93 L1592.90,300.99 L1601.46,303.04 L1609.70,299.50 L1618.25,301.56 L1626.81,304.07 L1635.36,302.13 L1643.91,298.48 L1652.47,299.50 L1661.02,297.79 L1669.58,295.62 L1678.13,296.77 L1686.69,297.34 L1695.24,293.34 L1703.80,294.14 L1712.35,295.62 L1720.68,294.94 L1729.46,293.00 L1738.02,292.20 L1746.34,299.27 L1754.90,301.90 L1763.34,295.51 L1772.01,297.56 L1780.56,299.50 L1789.12,298.70 L1797.67,298.36" fill="none" stroke="#6ed0e0" stroke-width="1" stroke-linejoin="round"/>
<path d="M992.12,377.70 L1011.71,378.15 L1020.61,376.59 L1029.51,375.48 L1037.30,377.26 L1046.87,378.15 L1055.11,376.14 L1064.01,377.48 L1072.47,377.26 L1081.15,373.92 L1089.61,375.70 L1098.51,370.58 L1106.97,369.91 L1115.20,367.24 L1124.11,369.91 L1132.34,376.59 L1140.80,375.48 L1149.70,372.36 L1158.16,372.36 L1166.39,375.48 L1175.30,375.48 L1183.53,374.59 L1191.99,379.48 L1200.45,376.59 L1208.68,375.70 L1217.58,376.59 L1226.04,371.25 L1234.28,372.14 L1243.18,373.47 L1251.64,373.47 L1259.87,370.58 L1268.33,368.35 L1277.01,376.14 L1285.47,377.70 L1293.92,375.70 L1302.61,377.70 L1311.06,375.25 L1319.52,378.37 L1328.20,378.37 L1336.66,373.47 L1345.12,373.92 L1353.80,376.14 L1362.25,373.25 L1370.71,369.91 L1379.39,367.24 L1387.85,368.35 L1395.00,374.59 L1405.02,378.15 L1413.92,371.69 L1421.71,371.69 L1430.61,372.81 L1439.07,373.47 L1447.75,368.80 L1456.21,367.24 L1464.66,370.58 L1473.34,374.59 L1481.80,375.70 L1490.70,368.80 L1498.94,369.02 L1507.40,373.25 L1515.85,376.59 L1524.53,371.69 L1532.99,370.58 L1541.45,369.47 L1550.13,368.35 L1558.59,369.47 L1567.05,368.80 L1575.73,370.58 L1584.18,371.25 L1592.64,365.68 L1601.32,364.57 L1609.78,366.57 L1618.24,365.46 L1626.47,365.68 L1635.37,365.02 L1643.83,367.69 L1652.07,366.13 L1660.52,366.57 L1669.43,374.36 L1678.11,373.47 L1686.56,372.14 L1695.02,379.93 L1703.70,376.59 L1712.16,371.02 L1720.62,365.68 L1729.30,367.91 L1737.76,376.59 L1746.21,373.92 L1754.89,371.02 L1763.35,386.83 L1771.81,377.26 L1780.49,372.14 L1788.95,373.92 L1797.40,374.36 L1797.40,401.5 L992.12,401.5 Z" fill="#ef843c" fill-opacity="0.1" stroke="none"/>
<path d="M992.12,377.70 L1011.71,378.15 L1020.61,376.59 L1029.51,375.48 L1037.30,377.26 L1046.87,378.15 L1055.11,376.14 L1064.01,377.48 L1072.47,377.26 L1081.15,373.92 L1089.61,375.70 L1098.51,370.58 L1106.97,369.91 L1115.20,367.24 L1124.11,369.91 L1132.34,376.59 L1140.80,375.48 L1149.70,372.36 L1158.16,372.36 L1166.39,375.48 L1175.30,375.48 L1183.53,374.59 L1191.99,379.48 L1200.45,376.59 L1208.68,375.70 L1217.58,376.59 L1226.04,371.25 L1234.28,372.14 L1243.18,373.47 L1251.64,373.47 L1259.87,370.58 L1268.33,368.35 L1277.01,376.14 L1285.47,377.70 L1293.92,375.70 L1302.61,377.70 L1311.06,375.25 L1319.52,378.37 L1328.20,378.37 L1336.66,373.47 L1345.12,373.92 L1353.80,376.14 L1362.25,373.25 L1370.71,369.91 L1379.39,367.24 L1387.85,368.35 L1395.00,374.59 L1405.02,378.15 L1413.92,371.69 L1421.71,371.69 L1430.61,372.81 L1439.07,373.47 L1447.75,368.80 L1456.21,367.24 L1464.66,370.58 L1473.34,374.59 L1481.80,375.70 L1490.70,368.80 L1498.94,369.02 L1507.40,373.25 L1515.85,376.59 L1524.53,371.69 L1532.99,370.58 L1541.45,369.47 L1550.13,368.35 L1558.59,369.47 L1567.05,368.80 L1575.73,370.58 L1584.18,371.25 L1592.64,365.68 L1601.32,364.57 L1609.78,366.57 L1618.24,365.46 L1626.47,365.68 L1635.37,365.02 L1643.83,367.69 L1652.07,366.13 L1660.52,366.57 L1669.43,374.36 L1678.11,373.47 L1686.56,372.14 L1695.02,379.93 L1703.70,376.59 L1712.16,371.02 L1720.62,365.68 L1729.30,367.91 L1737.76,376.59 L1746.21,373.92 L1754.89,371.02 L1763.35,386.83 L1771.81,377.26 L1780.49,372.14 L1788.95,373.92 L1797.40,374.36" fill="none" stroke="#ef843c" stroke-width="1" stroke-linejoin="round"/>
</g>
<text x="987.00" y="229.00" font-size="12" fill="#d8d9da" text-anchor="end" stroke="#d8d9da" stroke-width="0.3">2.0 s</text>
<text x="987.00" y="254.14" font-size="12" fill="#d8d9da" text-anchor="end" stroke="#d8d9da" stroke-width="0.3">1.0 s</text>
<text x="987.00" y="279.28" font-size="12" fill="#d8d9da" text-anchor="end" stroke="#d8d9da" stroke-width="0.3">500 ms</text>
<text x="987.00" y="304.42" font-size="12" fill="#d8d9da" text-anchor="end" stroke="#d8d9da" stroke-width="0.3">250 ms</text>
<text x="987.00" y="329.56" font-size="12" fill="#d8d9da" text-anchor="end" stroke="#d8d9da" stroke-width="0.3">125 ms</text>
<text x="987.00" y="354.70" font-size="12" fill="#d8d9da" text-anchor="end" stroke="#d8d9da" stroke-width="0.3">63 ms</text>
<text x="987.00" y="379.84" font-size="12" fill="#d8d9da" text-anchor="end" stroke="#d8d9da" stroke-width="0.3">31 ms</text>
<text x="987.00" y="404.98" font-size="12" fill="#d8d9da" text-anchor="end" stroke="#d8d9da" stroke-width="0.3">16 ms</text>
<text x="1030.00" y="419.00" font-size="12" fill="#d8d9da" text-anchor="middle" letter-spacing="-0.36" stroke="#d8d9da" stroke-width="0.3">18:00</text>
<text x="1115.36" y="419.00" font-size="12" fill="#d8d9da" text-anchor="middle" letter-spacing="-0.36" stroke="#d8d9da" stroke-width="0.3">18:05</text>
<text x="1200.72" y="419.00" font-size="12" fill="#d8d9da" text-anchor="middle" letter-spacing="-0.36" stroke="#d8d9da" stroke-width="0.3">18:10</text>
<text x="1286.08" y="419.00" font-size="12" fill="#d8d9da" text-anchor="middle" letter-spacing="-0.36" stroke="#d8d9da" stroke-width="0.3">18:15</text>
<text x="1371.44" y="419.00" font-size="12" fill="#d8d9da" text-anchor="middle" letter-spacing="-0.36" stroke="#d8d9da" stroke-width="0.3">18:20</text>
<text x="1456.80" y="419.00" font-size="12" fill="#d8d9da" text-anchor="middle" letter-spacing="-0.36" stroke="#d8d9da" stroke-width="0.3">18:25</text>
<text x="1542.16" y="419.00" font-size="12" fill="#d8d9da" text-anchor="middle" letter-spacing="-0.36" stroke="#d8d9da" stroke-width="0.3">18:30</text>
<text x="1627.52" y="419.00" font-size="12" fill="#d8d9da" text-anchor="middle" letter-spacing="-0.36" stroke="#d8d9da" stroke-width="0.3">18:35</text>
<text x="1712.88" y="419.00" font-size="12" fill="#d8d9da" text-anchor="middle" letter-spacing="-0.36" stroke="#d8d9da" stroke-width="0.3">18:40</text>
<text x="1798.24" y="419.00" font-size="12" fill="#d8d9da" text-anchor="middle" letter-spacing="-0.36" stroke="#d8d9da" stroke-width="0.3">18:45</text>
<rect x="956.1" y="438.2" width="12" height="3.6" rx="1.5" fill="#7eb26d"/>
<text x="972.30" y="444.00" font-size="12" fill="#d8d9da" stroke="#d8d9da" stroke-width="0.3">999</text>
<rect x="1001.4" y="438.2" width="12" height="3.6" rx="1.5" fill="#eab839"/>
<text x="1017.60" y="444.00" font-size="12" fill="#d8d9da" stroke="#d8d9da" stroke-width="0.3">99</text>
<rect x="1041.1" y="438.2" width="12" height="3.6" rx="1.5" fill="#6ed0e0"/>
<text x="1057.30" y="444.00" font-size="12" fill="#d8d9da" stroke="#d8d9da" stroke-width="0.3">95</text>
<rect x="1079.6" y="438.2" width="12" height="3.6" rx="1.5" fill="#ef843c"/>
<text x="1095.80" y="444.00" font-size="12" fill="#d8d9da" stroke="#d8d9da" stroke-width="0.3">80</text>
<text x="464" y="487.1" font-size="13" font-weight="bold" fill="#e2e3e4" text-anchor="middle" textLength="95.7" lengthAdjust="spacingAndGlyphs">CPS By Instance</text>
<g id="c3">
<rect x="57" y="505" width="484" height="1" fill="rgba(200,200,200,0.22)"/>
<rect x="57" y="545" width="484" height="1" fill="rgba(200,200,200,0.22)"/>
<rect x="57" y="585" width="484" height="1" fill="rgba(200,200,200,0.22)"/>
<rect x="57" y="625" width="484" height="1" fill="rgba(200,200,200,0.22)"/>
<rect x="57" y="665" width="484" height="1" fill="rgba(200,200,200,0.22)"/>
<rect x="57" y="705" width="484" height="1" fill="rgba(200,200,200,0.22)"/>
<rect x="79" y="505" width="1" height="201" fill="rgba(200,200,200,0.22)"/>
<rect x="181" y="505" width="1" height="201" fill="rgba(200,200,200,0.22)"/>
<rect x="282" y="505" width="1" height="201" fill="rgba(200,200,200,0.22)"/>
<rect x="384" y="505" width="1" height="201" fill="rgba(200,200,200,0.22)"/>
<rect x="486" y="505" width="1" height="201" fill="rgba(200,200,200,0.22)"/>
<path d="M57.00,552.50 L59.66,551.71 L64.31,555.30 L69.37,555.96 L74.55,554.90 L79.61,548.17 L84.66,555.83 L89.85,554.96 L94.64,553.03 L99.83,561.02 L104.88,555.22 L109.93,557.02 L115.12,567.40 L120.18,565.94 L125.23,566.07 L130.42,571.39 L135.47,566.93 L140.53,572.99 L145.58,561.87 L150.77,558.75 L155.82,559.42 L160.88,560.75 L165.80,558.62 L170.99,562.74 L176.04,565.14 L181.10,561.15 L186.15,557.62 L191.21,566.73 L196.39,561.68 L201.32,561.41 L206.37,561.01 L211.56,564.47 L216.61,556.36 L221.67,559.15 L226.85,566.07 L231.91,569.19 L236.96,571.39 L242.02,566.07 L247.21,569.13 L252.26,565.40 L257.31,563.14 L262.50,550.77 L267.56,551.04 L272.61,558.09 L277.67,555.03 L282.85,557.16 L287.77,563.14 L292.83,565.67 L295.00,563.41 L302.71,560.35 L307.90,552.10 L312.96,558.75 L318.28,562.74 L323.20,556.76 L328.25,561.41 L333.57,564.07 L338.50,565.01 L343.55,558.49 L348.60,563.41 L353.79,559.95 L358.85,557.02 L363.90,562.74 L369.09,570.33 L374.14,568.33 L379.20,567.80 L384.12,566.07 L389.44,560.48 L394.49,561.41 L399.42,557.82 L404.47,565.01 L409.66,565.40 L414.71,566.61 L419.77,560.28 L424.82,564.74 L430.01,569.00 L434.93,560.75 L439.99,563.41 L445.04,566.47 L450.23,563.41 L455.28,567.80 L460.34,565.01 L465.52,568.33 L470.58,565.80 L475.63,571.39 L480.69,573.12 L485.88,570.99 L490.93,569.85 L495.85,574.32 L500.91,580.04 L506.09,570.72 L511.15,561.68 L516.20,577.11 L521.12,566.34 L526.18,558.75 L531.37,566.47 L536.42,571.39" fill="none" stroke="#3f2b5b" stroke-width="1" stroke-linejoin="round"/>
<path d="M57.00,538.97 L59.66,536.71 L64.31,539.37 L69.37,541.23 L74.55,538.97 L79.61,536.31 L84.66,542.03 L89.85,543.62 L94.64,539.23 L99.83,546.02 L104.88,545.62 L109.93,545.35 L115.12,555.59 L120.18,552.67 L125.23,557.59 L130.42,562.24 L135.47,559.32 L140.53,562.64 L145.58,550.01 L150.77,544.02 L155.82,544.55 L160.88,548.94 L165.80,546.28 L170.99,551.60 L176.04,551.20 L181.10,545.88 L186.15,549.61 L191.21,554.26 L196.39,548.94 L201.32,548.94 L206.37,548.68 L211.56,551.87 L216.61,544.95 L221.67,548.28 L226.85,554.93 L231.91,561.58 L236.96,560.65 L242.02,555.33 L247.21,557.59 L252.26,556.26 L257.31,550.94 L262.50,534.71 L267.56,536.04 L272.61,542.96 L277.67,539.63 L282.85,544.69 L287.77,553.33 L292.83,554.93 L295.00,553.60 L302.71,548.68 L307.90,541.23 L312.96,546.02 L318.28,547.61 L323.20,542.29 L328.25,548.68 L333.57,552.53 L338.50,550.27 L343.55,545.62 L348.60,551.60 L353.79,544.29 L358.85,544.95 L363.90,551.34 L369.09,557.59 L374.14,555.86 L379.20,555.19 L384.12,554.00 L389.44,549.34 L394.49,548.28 L399.42,545.35 L404.47,552.93 L409.66,554.26 L414.71,556.26 L419.77,552.27 L424.82,554.53 L430.01,556.26 L434.93,550.27 L439.99,552.53 L445.04,555.33 L450.23,551.60 L455.28,556.92 L460.34,552.27 L465.52,554.53 L470.58,555.86 L475.63,560.25 L480.69,558.52 L485.88,559.58 L490.93,562.24 L495.85,564.90 L500.91,571.55 L506.09,559.32 L511.15,551.60 L516.20,565.57 L521.12,550.67 L526.18,546.95 L531.37,557.32 L536.42,558.25" fill="none" stroke="#82b5d8" stroke-width="1" stroke-linejoin="round"/>
<path d="M57.00,679.57 L69.37,679.57 L79.61,678.50 L84.66,680.23 L89.85,680.23 L94.64,679.43 L99.83,680.76 L109.93,680.76 L115.12,682.23 L120.18,681.83 L125.23,682.49 L130.42,682.89 L140.53,682.89 L145.58,680.90 L150.77,680.10 L155.82,680.10 L160.88,680.90 L165.80,680.76 L170.99,681.56 L176.04,681.56 L181.10,680.50 L186.15,681.16 L191.21,682.09 L196.39,681.16 L206.37,681.16 L211.56,681.83 L216.61,680.50 L221.67,680.90 L226.85,682.23 L231.91,682.89 L236.96,682.76 L242.02,682.09 L252.26,682.09 L257.31,681.16 L262.50,678.50 L267.56,678.77 L272.61,680.10 L277.67,679.57 L282.85,680.23 L287.77,681.56 L294.43,681.56 L302.87,681.22 L308.17,679.45 L313.32,680.81 L318.75,680.81 L323.50,679.72 L328.93,681.22 L334.36,681.89 L339.38,681.49 L344.54,680.54 L349.70,681.49 L354.04,679.86 L360.15,680.40 L365.30,681.49 L369.65,682.57 L380.50,682.17 L385.93,681.49 L391.36,680.81 L399.51,680.54 L404.26,681.89 L414.44,682.44 L419.86,681.76 L429.36,682.44 L434.79,681.22 L444.29,681.89 L449.72,681.49 L455.15,682.84 L459.90,681.76 L470.08,682.17 L475.51,682.84 L485.01,682.57 L495.87,683.52 L501.03,684.88 L506.05,682.57 L510.80,681.76 L516.23,683.93 L520.98,681.49 L525.73,680.81 L531.16,682.57 L536.99,682.84" fill="none" stroke="#447ebc" stroke-width="1" stroke-linejoin="round"/>
<path d="M57.00,681.27 L69.37,681.27 L79.61,680.20 L84.66,681.93 L89.85,681.93 L94.64,681.13 L99.83,682.46 L109.93,682.46 L115.12,683.93 L120.18,683.53 L125.23,684.19 L130.42,684.59 L140.53,684.59 L145.58,682.60 L150.77,681.80 L155.82,681.80 L160.88,682.60 L165.80,682.46 L170.99,683.26 L176.04,683.26 L181.10,682.20 L186.15,682.86 L191.21,683.79 L196.39,682.86 L206.37,682.86 L211.56,683.53 L216.61,682.20 L221.67,682.60 L226.85,683.93 L231.91,684.59 L236.96,684.46 L242.02,683.79 L252.26,683.79 L257.31,682.86 L262.50,680.20 L267.56,680.47 L272.61,681.80 L277.67,681.27 L282.85,681.93 L287.77,683.26 L294.43,683.26 L302.87,682.92 L308.17,681.15 L313.32,682.51 L318.75,682.51 L323.50,681.42 L328.93,682.92 L334.36,683.59 L339.38,683.19 L344.54,682.24 L349.70,683.19 L354.04,681.56 L360.15,682.10 L365.30,683.19 L369.65,684.27 L380.50,683.87 L385.93,683.19 L391.36,682.51 L399.51,682.24 L404.26,683.59 L414.44,684.14 L419.86,683.46 L429.36,684.14 L434.79,682.92 L444.29,683.59 L449.72,683.19 L455.15,684.54 L459.90,683.46 L470.08,683.87 L475.51,684.54 L485.01,684.27 L495.87,685.22 L501.03,686.58 L506.05,684.27 L510.80,683.46 L516.23,685.63 L520.98,683.19 L525.73,682.51 L531.16,684.27 L536.99,684.54" fill="none" stroke="#bf1b00" stroke-width="1" stroke-linejoin="round"/>
<path d="M57.00,679.37 L69.37,679.37 L79.61,678.30 L84.66,680.03 L89.85,680.03 L94.64,679.23 L99.83,680.56 L109.93,680.56 L115.12,682.03 L120.18,681.63 L125.23,682.29 L130.42,682.69 L140.53,682.69 L145.58,680.70 L150.77,679.90 L155.82,679.90 L160.88,680.70 L165.80,680.56 L170.99,681.36 L176.04,681.36 L181.10,680.30 L186.15,680.96 L191.21,681.89 L196.39,680.96 L206.37,680.96 L211.56,681.63 L216.61,680.30 L221.67,680.70 L226.85,682.03 L231.91,682.69 L236.96,682.56 L242.02,681.89 L252.26,681.89 L257.31,680.96 L262.50,678.30 L267.56,678.57 L272.61,679.90 L277.67,679.37 L282.85,680.03 L287.77,681.36 L294.43,681.36 L302.87,681.02 L308.17,679.25 L313.32,680.61 L318.75,680.61 L323.50,679.52 L328.93,681.02 L334.36,681.69 L339.38,681.29 L344.54,680.34 L349.70,681.29 L354.04,679.66 L360.15,680.20 L365.30,681.29 L369.65,682.37 L380.50,681.97 L385.93,681.29 L391.36,680.61 L399.51,680.34 L404.26,681.69 L414.44,682.24 L419.86,681.56 L429.36,682.24 L434.79,681.02 L444.29,681.69 L449.72,681.29 L455.15,682.64 L459.90,681.56 L470.08,681.97 L475.51,682.64 L485.01,682.37 L495.87,683.32 L501.03,684.68 L506.05,682.37 L510.80,681.56 L516.23,683.73 L520.98,681.29 L525.73,680.61 L531.16,682.37 L536.99,682.64" fill="none" stroke="#b7dbab" stroke-width="1" stroke-linejoin="round"/>
<path d="M57.00,552.00 L59.66,550.01 L64.31,553.60 L69.37,554.26 L74.55,553.20 L79.61,552.27 L84.66,555.33 L89.85,556.66 L94.64,552.53 L99.83,559.32 L104.88,556.92 L109.93,556.52 L115.12,566.90 L120.18,564.24 L125.23,565.57 L130.42,570.89 L135.47,568.63 L140.53,572.49 L145.58,563.57 L150.77,558.25 L155.82,558.92 L160.88,560.25 L165.80,556.92 L170.99,562.24 L176.04,564.64 L181.10,560.65 L186.15,559.32 L191.21,566.23 L196.39,561.18 L201.32,560.91 L206.37,560.51 L211.56,563.97 L216.61,555.86 L221.67,558.65 L226.85,565.57 L231.91,570.89 L236.96,569.29 L242.02,565.57 L247.21,568.63 L252.26,564.90 L257.31,562.64 L262.50,550.27 L267.56,548.94 L272.61,555.99 L277.67,552.93 L282.85,556.66 L287.77,562.64 L292.83,563.97 L295.00,562.91 L302.71,559.85 L307.90,551.60 L312.96,558.25 L318.28,562.24 L323.20,556.26 L328.25,560.91 L333.57,563.57 L338.50,564.51 L343.55,557.99 L348.60,562.91 L353.79,558.25 L358.85,556.52 L363.90,562.24 L369.09,569.83 L374.14,567.83 L379.20,567.30 L384.12,565.57 L389.44,559.98 L394.49,560.91 L399.42,557.32 L404.47,564.51 L409.66,564.90 L414.71,564.51 L419.77,561.98 L424.82,564.24 L430.01,568.50 L434.93,560.25 L439.99,561.31 L445.04,565.97 L450.23,562.91 L455.28,567.30 L460.34,564.51 L465.52,567.83 L470.58,565.30 L475.63,570.89 L480.69,572.62 L485.88,570.49 L490.93,571.55 L495.85,572.62 L500.91,579.54 L506.09,570.22 L511.15,561.18 L516.20,576.61 L521.12,564.24 L526.18,558.25 L531.37,565.97 L536.42,570.89" fill="none" stroke="#f4d598" stroke-width="1" stroke-linejoin="round"/>
<rect x="57" y="704.6" width="480" height="2.6" fill="#c3c3dc"/>
</g>
<text x="52.00" y="509.00" font-size="12" fill="#d8d9da" text-anchor="end" stroke="#d8d9da" stroke-width="0.3">10 K</text>
<text x="52.00" y="549.10" font-size="12" fill="#d8d9da" text-anchor="end" stroke="#d8d9da" stroke-width="0.3">8 K</text>
<text x="52.00" y="589.20" font-size="12" fill="#d8d9da" text-anchor="end" stroke="#d8d9da" stroke-width="0.3">6 K</text>
<text x="52.00" y="629.30" font-size="12" fill="#d8d9da" text-anchor="end" stroke="#d8d9da" stroke-width="0.3">4 K</text>
<text x="52.00" y="669.40" font-size="12" fill="#d8d9da" text-anchor="end" stroke="#d8d9da" stroke-width="0.3">2 K</text>
<text x="52.00" y="709.50" font-size="12" fill="#d8d9da" text-anchor="end" stroke="#d8d9da" stroke-width="0.3">0</text>
<text x="80.10" y="724.00" font-size="12" fill="#d8d9da" text-anchor="middle" letter-spacing="-0.36" stroke="#d8d9da" stroke-width="0.3">18:00</text>
<text x="181.70" y="724.00" font-size="12" fill="#d8d9da" text-anchor="middle" letter-spacing="-0.36" stroke="#d8d9da" stroke-width="0.3">18:10</text>
<text x="283.30" y="724.00" font-size="12" fill="#d8d9da" text-anchor="middle" letter-spacing="-0.36" stroke="#d8d9da" stroke-width="0.3">18:20</text>
<text x="384.90" y="724.00" font-size="12" fill="#d8d9da" text-anchor="middle" letter-spacing="-0.36" stroke="#d8d9da" stroke-width="0.3">18:30</text>
<text x="486.50" y="724.00" font-size="12" fill="#d8d9da" text-anchor="middle" letter-spacing="-0.36" stroke="#d8d9da" stroke-width="0.3">18:40</text>
<text x="828.00" y="514.90" font-size="12" fill="#2ab8ec" text-anchor="end" stroke="#2ab8ec" stroke-width="0.3">max</text>
<text x="887.00" y="514.90" font-size="12" fill="#2ab8ec" text-anchor="end" stroke="#2ab8ec" stroke-width="0.3">current</text>
<rect x="562" y="521" width="335" height="26" fill="#262628"/>
<rect x="572" y="534.1" width="12.2" height="3.8" rx="1.3" fill="#b7dbab"/>
<text x="591.00" y="538.00" font-size="12" fill="#d8d9da" stroke="#d8d9da" stroke-width="0.3">test-tidb-tidb-0 Query OK</text>
<text x="828.00" y="538.00" font-size="12" fill="#d8d9da" text-anchor="end" stroke="#d8d9da" stroke-width="0.3">1.36 K</text>
<text x="887.00" y="538.00" font-size="12" fill="#d8d9da" text-anchor="end" stroke="#d8d9da" stroke-width="0.3">1.16 K</text>
<rect x="572" y="560.1" width="12.2" height="3.8" rx="1.3" fill="#82b5d8"/>
<text x="591.00" y="564.00" font-size="12" fill="#d8d9da" stroke="#d8d9da" stroke-width="0.3">test-tidb-tidb-0 StmtExecute OK</text>
<text x="828.00" y="564.00" font-size="12" fill="#d8d9da" text-anchor="end" stroke="#d8d9da" stroke-width="0.3">8.50 K</text>
<text x="887.00" y="564.00" font-size="12" fill="#d8d9da" text-anchor="end" stroke="#d8d9da" stroke-width="0.3">7.35 K</text>
<rect x="562" y="573" width="335" height="26" fill="#262628"/>
<rect x="572" y="586.1" width="12.2" height="3.8" rx="1.3" fill="#2f575e"/>
<text x="591.00" y="590.00" font-size="12" fill="#d8d9da" stroke="#d8d9da" stroke-width="0.3">test-tidb-tidb-1 Query OK</text>
<text x="828.00" y="590.00" font-size="12" fill="#d8d9da" text-anchor="end" stroke="#d8d9da" stroke-width="0.3">1.25 K</text>
<text x="887.00" y="590.00" font-size="12" fill="#d8d9da" text-anchor="end" stroke="#d8d9da" stroke-width="0.3">1.08 K</text>
<rect x="572" y="612.1" width="12.2" height="3.8" rx="1.3" fill="#3f2b5b"/>
<text x="591.00" y="616.00" font-size="12" fill="#d8d9da" stroke="#d8d9da" stroke-width="0.3">test-tidb-tidb-1 StmtExecute OK</text>
<text x="828.00" y="616.00" font-size="12" fill="#d8d9da" text-anchor="end" stroke="#d8d9da" stroke-width="0.3">7.86 K</text>
<text x="887.00" y="616.00" font-size="12" fill="#d8d9da" text-anchor="end" stroke="#d8d9da" stroke-width="0.3">6.81 K</text>
<rect x="562" y="625" width="335" height="26" fill="#262628"/>
<rect x="572" y="638.1" width="12.2" height="3.8" rx="1.3" fill="#890f02"/>
<text x="591.00" y="642.00" font-size="12" fill="#d8d9da" stroke="#d8d9da" stroke-width="0.3">test-tidb-tidb-2 Query OK</text>
<text x="828.00" y="642.00" font-size="12" fill="#d8d9da" text-anchor="end" stroke="#d8d9da" stroke-width="0.3">1.24 K</text>
<text x="887.00" y="642.00" font-size="12" fill="#d8d9da" text-anchor="end" stroke="#d8d9da" stroke-width="0.3">1.06 K</text>
<rect x="572" y="664.1" width="12.2" height="3.8" rx="1.3" fill="#f4d598"/>
<text x="591.00" y="668.00" font-size="12" fill="#d8d9da" stroke="#d8d9da" stroke-width="0.3">test-tidb-tidb-2 StmtExecute OK</text>
<text x="828.00" y="668.00" font-size="12" fill="#d8d9da" text-anchor="end" stroke="#d8d9da" stroke-width="0.3">7.80 K</text>
<text x="887.00" y="668.00" font-size="12" fill="#d8d9da" text-anchor="end" stroke="#d8d9da" stroke-width="0.3">6.70 K</text>
<text x="1383" y="487.1" font-size="13" font-weight="bold" fill="#e2e3e4" text-anchor="middle" textLength="103.8" lengthAdjust="spacingAndGlyphs">Failed Query OPM</text>
<g id="c4">
<rect x="969" y="505" width="734" height="1" fill="rgba(200,200,200,0.22)"/>
<rect x="969" y="542" width="734" height="1" fill="rgba(200,200,200,0.22)"/>
<rect x="969" y="580" width="734" height="1" fill="rgba(200,200,200,0.22)"/>
<rect x="969" y="706" width="734" height="1" fill="rgba(200,200,200,0.22)"/>
<rect x="1003" y="505" width="1" height="202" fill="rgba(200,200,200,0.22)"/>
<rect x="1080" y="505" width="1" height="202" fill="rgba(200,200,200,0.22)"/>
<rect x="1157" y="505" width="1" height="202" fill="rgba(200,200,200,0.22)"/>
<rect x="1234" y="505" width="1" height="202" fill="rgba(200,200,200,0.22)"/>
<rect x="1311" y="505" width="1" height="202" fill="rgba(200,200,200,0.22)"/>
<rect x="1388" y="505" width="1" height="202" fill="rgba(200,200,200,0.22)"/>
<rect x="1465" y="505" width="1" height="202" fill="rgba(200,200,200,0.22)"/>
<rect x="1542" y="505" width="1" height="202" fill="rgba(200,200,200,0.22)"/>
<rect x="1619" y="505" width="1" height="202" fill="rgba(200,200,200,0.22)"/>
<rect x="1696" y="505" width="1" height="202" fill="rgba(200,200,200,0.22)"/>
</g>
<text x="963.20" y="509.10" font-size="12" fill="#d8d9da" text-anchor="end" stroke="#d8d9da" stroke-width="0.3">4.0</text>
<text x="963.20" y="547.60" font-size="12" fill="#d8d9da" text-anchor="end" stroke="#d8d9da" stroke-width="0.3">2.0</text>
<text x="963.20" y="585.20" font-size="12" fill="#d8d9da" text-anchor="end" stroke="#d8d9da" stroke-width="0.3">1.0</text>
<text x="963.20" y="710.00" font-size="12" fill="#d8d9da" text-anchor="end" stroke="#d8d9da" stroke-width="0.3">0.1</text>
<text x="1003.50" y="724.00" font-size="12" fill="#d8d9da" text-anchor="middle" letter-spacing="-0.36" stroke="#d8d9da" stroke-width="0.3">18:00</text>
<text x="1080.50" y="724.00" font-size="12" fill="#d8d9da" text-anchor="middle" letter-spacing="-0.36" stroke="#d8d9da" stroke-width="0.3">18:05</text>
<text x="1157.50" y="724.00" font-size="12" fill="#d8d9da" text-anchor="middle" letter-spacing="-0.36" stroke="#d8d9da" stroke-width="0.3">18:10</text>
<text x="1234.50" y="724.00" font-size="12" fill="#d8d9da" text-anchor="middle" letter-spacing="-0.36" stroke="#d8d9da" stroke-width="0.3">18:15</text>
<text x="1311.50" y="724.00" font-size="12" fill="#d8d9da" text-anchor="middle" letter-spacing="-0.36" stroke="#d8d9da" stroke-width="0.3">18:20</text>
<text x="1388.50" y="724.00" font-size="12" fill="#d8d9da" text-anchor="middle" letter-spacing="-0.36" stroke="#d8d9da" stroke-width="0.3">18:25</text>
<text x="1465.50" y="724.00" font-size="12" fill="#d8d9da" text-anchor="middle" letter-spacing="-0.36" stroke="#d8d9da" stroke-width="0.3">18:30</text>
<text x="1542.50" y="724.00" font-size="12" fill="#d8d9da" text-anchor="middle" letter-spacing="-0.36" stroke="#d8d9da" stroke-width="0.3">18:35</text>
<text x="1619.50" y="724.00" font-size="12" fill="#d8d9da" text-anchor="middle" letter-spacing="-0.36" stroke="#d8d9da" stroke-width="0.3">18:40</text>
<text x="1696.50" y="724.00" font-size="12" fill="#d8d9da" text-anchor="middle" letter-spacing="-0.36" stroke="#d8d9da" stroke-width="0.3">18:45</text>
<text x="1332.60" y="586.70" font-size="13" fill="#e2e3e3" text-anchor="middle" letter-spacing="0.1" stroke="#e2e3e3" stroke-width="0.3">No data points</text>
<text x="1757.00" y="515.00" font-size="12" fill="#2ab8ec" text-anchor="end" stroke="#2ab8ec" stroke-width="0.3">max</text>
<text x="1806.00" y="515.00" font-size="12" fill="#2ab8ec" text-anchor="end" stroke="#2ab8ec" stroke-width="0.3">current</text>
</svg></body></html>
